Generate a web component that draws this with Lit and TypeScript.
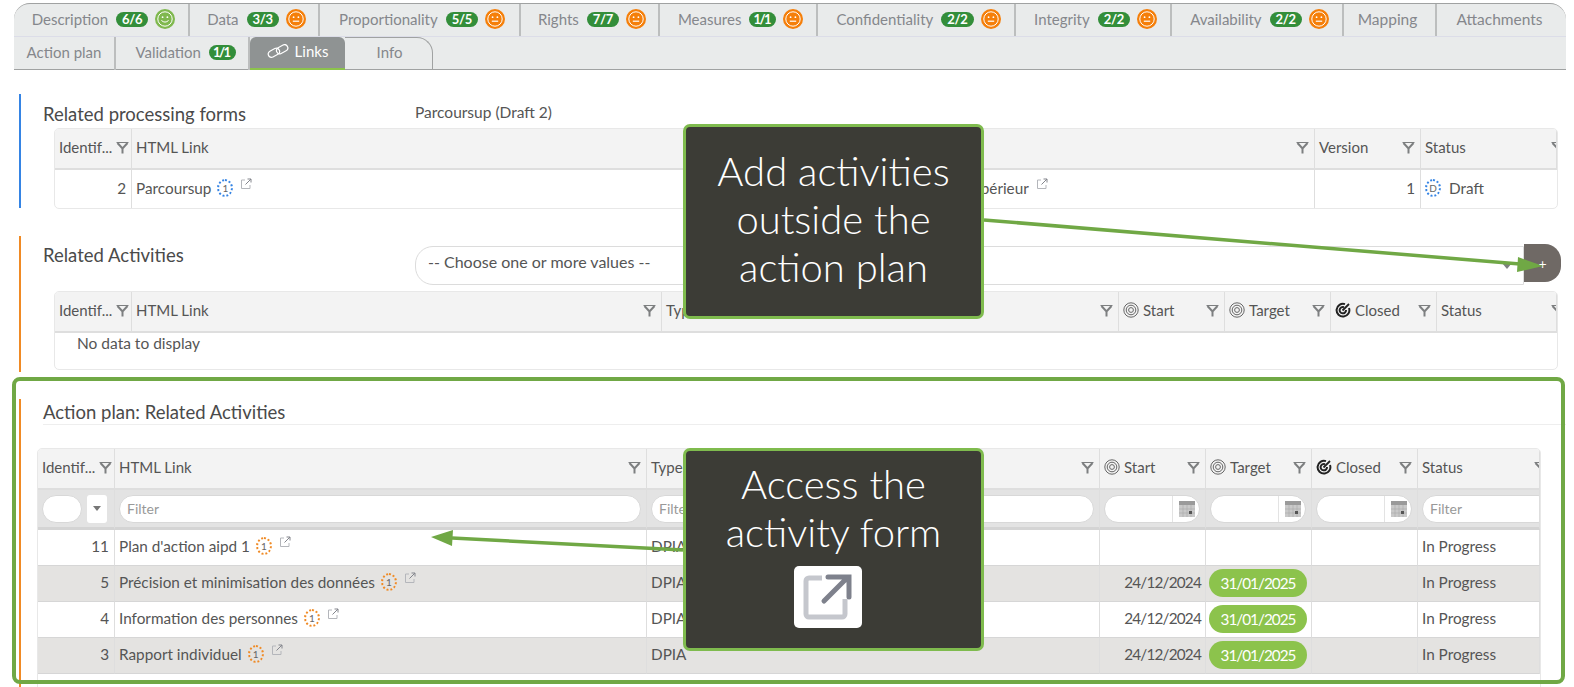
import {LitElement, css, html, svg} from "lit";
import {customElement} from "lit/decorators.js";

const face = (happy: boolean) => html`
    <svg class="face" viewBox="0 0 20 20">
        <circle cx="10" cy="10" r="10" fill=${happy ? "#7fb84e" : "#f57f0a"}></circle>
        <circle cx="10" cy="10" r="7.2" fill="none" stroke="#fff" stroke-width="1"></circle>
        <circle cx="7.6" cy="8.2" r=".9" fill="#fff"></circle>
        <circle cx="12.4" cy="8.2" r=".9" fill="#fff"></circle>
        ${happy
            ? svg`<path d="M6.4 11.4q3.6 3.4 7.2 0" fill="none" stroke="#fff" stroke-width="1"></path>`
            : svg`<path d="M6.8 12.2h6.4" fill="none" stroke="#fff" stroke-width="1.2"></path>`}
    </svg>`;

const funnel = html`
    <svg class="funnel" viewBox="0 0 13 13" fill="none" stroke="#7d7f80">
        <path d="M.5 1.500h12" stroke-width="1"></path>
        <path d="M1.500 2 6.500 7.500 11.500 2M6.500 7v5.500" stroke-width="2"></path>
    </svg>`;

const ext = html`
    <svg class="ext" viewBox="0 0 12 12" fill="none" stroke="#b4b6bb" stroke-width="1">
        <path d="M5 2H1.500v8.500H10V7"></path>
        <path d="M5.500 6.500 11 1M7.500 1H11v3.500" stroke="#83858c"></path>
    </svg>`;

const target = html`
    <svg class="target" viewBox="0 0 16 16" fill="none" stroke="#666">
        <circle cx="8" cy="8" r="7.200"></circle>
        <circle cx="8" cy="8" r="4.800"></circle>
        <circle cx="8" cy="8" r="2.400"></circle>
    </svg>`;

const closed = html`
    <svg class="target" viewBox="0 0 16 16" fill="none" stroke="#222" stroke-width="2">
        <path d="M10 2.100A6.400 6.400 0 1 0 14 6"></path>
        <path d="M9 5.200A3.200 3.200 0 1 0 11 8"></path>
        <path d="M7.500 8.500 14 2" stroke-width="1.800"></path>
    </svg>`;

const calendar = html`
    <svg class="cal" viewBox="0 0 16 16">
        <rect width="16" height="16" fill="#9a9a9a"></rect>
        <rect y="4" width="16" height="12" fill="#c9c9c9"></rect>
        <path d="M0 8h16M0 12h16M4 4v12M8 4v12M12 4v12" stroke="#aaa" stroke-width=".6"></path>
        <rect x="10" y="10" width="3" height="3" fill="#555"></rect>
    </svg>`;

const tabsTop = [
    ["Description", "6/6", true],
    ["Data", "3/3", false],
    ["Proportionality", "5/5", false],
    ["Rights", "7/7", false],
    ["Measures", "1/1", false],
    ["Confidentiality", "2/2", false],
    ["Integrity", "2/2", false],
    ["Availability", "2/2", false],
    ["Mapping"],
    ["Attachments"],
] as [string, string?, boolean?][];

const activities = [
    ["11", "Plan d'action aipd 1", "", ""],
    ["5", "Précision et minimisation des données", "24/12/2024", "31/01/2025"],
    ["4", "Information des personnes", "24/12/2024", "31/01/2025"],
    ["3", "Rapport individuel", "24/12/2024", "31/01/2025"],
];

const badge = (count: string) =>
    html`<span class="badge ${count === "1/1" ? "narrow" : ""}">${count}</span>`;

@customElement("app-root")
export class AppRoot extends LitElement {
    static styles = css`
        :host {
            display: block;
            position: relative;
            height: 687px;
            overflow: hidden;
            background: #fff;
            font-family: Lato, "Liberation Sans", sans-serif;
            font-size: 15px;
            color: #555;
        }

        .tabs {
            margin: 3px 0 0 14px;
            width: 1552px;
            height: 67px;
            background: #e9ebeb;
            border-top: 1px solid #a0a2a2;
            border-bottom: 1px solid #a0a2a2;
            border-radius: 16px 16px 0 0;
            box-sizing: border-box;
        }

        .tab-row {
            display: grid;
            height: 33px;
            color: #85878c;
        }

        .tab-row.top {
            grid-template-columns: 176px 130px 201px 139px 158px 198px 156px 172px 93px 129px;
            border-bottom: 1px solid #dcdde8;
            box-sizing: border-box;
            width: 1552px;
        }

        .tab-row.bottom {
            grid-template-columns: 102px 134px 95px 88px;
        }

        .tab {
            display: flex;
            align-items: center;
            justify-content: center;
            gap: 8px;
            padding-bottom: 2px;
            border-right: 2px solid #bcbebe;
            box-sizing: border-box;
            white-space: nowrap;
        }

        .tab.scored {
            padding-left: 5px;
            gap: 8px;
        }

        .tab.plain {
            font-size: 15.500px;
            padding-right: 4px;
        }

        .tab:last-child {
            border-right: none;
        }

        .bottom .tab {
            padding-bottom: 3px;
        }

        .bottom .tab.valid {
            padding-left: 7px;
        }

        .tab.active {
            background: #8f9393;
            color: #fff;
            border-right: none;
            border-bottom: 2px solid #8cc34c;
            border-radius: 6px 6px 0 0;
            gap: 6px;
        }

        .bottom .tab.info {
            border: 1px solid #a0a2a2;
            border-left: none;
            border-bottom: none;
            border-radius: 0 16px 0 0;
            padding: 0 0 5px 2px;
        }

        .badge {
            background: #338e3a;
            color: #fff;
            font-size: 13px;
            font-weight: 700;
            line-height: 15px;
            letter-spacing: -.3px;
            padding: 0 6px;
            border-radius: 8px;
        }

        .badge.narrow {
            letter-spacing: -1.500px;
            padding: 0 6px 0 4px;
        }

        .face {
            width: 20px;
            height: 20px;
            margin-left: -1px;
        }

        .section {
            margin-left: 19px;
            width: 1547px;
            border-left: 2px solid #f08a24;
            box-sizing: border-box;
            padding-left: 22px;
        }

        .section.forms {
            margin-top: 24px;
            height: 114px;
            border-left-color: #3584e4;
        }

        .section.related {
            margin-top: 28px;
            height: 136px;
        }

        .section.plan {
            margin-top: 27px;
            height: 290px;
        }

        .head {
            display: flex;
            height: 34px;
        }

        .related .head {
            height: 55px;
        }

        .title {
            width: 372px;
            flex: none;
            font-size: 18.500px;
            line-height: 22px;
            color: #4a4a4a;
            padding-top: 9px;
        }

        .related .title {
            padding-top: 8px;
        }

        .draft {
            padding-top: 9px;
            font-size: 15.500px;
        }

        .select {
            width: 1109px;
            height: 39px;
            margin-top: 10px;
            padding-left: 12px;
            border: 1px solid #dcdcdc;
            border-radius: 18px 0 0 18px;
            box-sizing: border-box;
            display: flex;
            align-items: center;
            justify-content: space-between;
            padding-bottom: 8px;
            font-size: 16px;
        }

        .caret {
            width: 0;
            height: 0;
            border: 5px solid transparent;
            border-top: 6px solid #7d7f80;
            border-bottom: none;
            margin: 8px 11px 0 0;
        }

        .plus {
            width: 37px;
            height: 38px;
            margin-top: 8px;
            background: #6f6965;
            color: #fff;
            border-radius: 0 16px 16px 0;
            display: flex;
            align-items: center;
            justify-content: center;
            font-size: 14px;
        }

        .plan-title {
            height: 25px;
            font-size: 18.500px;
            line-height: 26px;
            border-bottom: 1px solid #eee;
            color: #4a4a4a;
            margin-bottom: 23px;
        }

        .table {
            display: grid;
            border: 1px solid #e8e8e8;
            border-radius: 5px;
            box-sizing: border-box;
            overflow: hidden;
        }

        .forms .table {
            margin-left: 11px;
            width: 1504px;
            grid-template-columns: 77px 734px 449px 106px 1fr;
        }

        .related .table {
            margin-left: 11px;
            width: 1504px;
            height: 79px;
            grid-template-columns: 77px 530px 457px 106px 106px 106px 1fr;
            grid-template-rows: 41px 1fr;
        }

        .plan .table {
            margin-left: -6px;
            width: 1504px;
            grid-template-columns: 77px 532px 453px 106px 106px 106px 1fr;
        }

        .cell {
            display: flex;
            align-items: center;
            gap: 4px;
            padding: 0 4px;
            min-width: 0;
            white-space: nowrap;
            border-right: 1px solid #dedede;
            box-sizing: border-box;
            overflow: hidden;
        }

        .cell:last-child {
            border-right: none;
        }

        .th {
            height: 41px;
            background: #f3f3f3;
            border-bottom: 2px solid #dedede;
            justify-content: space-between;
            padding: 0 5px 3px 4px;
        }

        .th .label {
            display: flex;
            align-items: center;
            gap: 4px;
        }

        .funnel {
            width: 13px;
            height: 13px;
            flex: none;
        }

        .th.clip .funnel {
            margin-right: -13px;
        }

        .target {
            width: 16px;
            height: 16px;
            flex: none;
        }

        .filter {
            height: 40px;
            background: #e3e3e3;
            border-bottom: 3px solid #d4d4d4;
            padding: 0 5px 0 4px;
        }

        .field {
            flex: 1;
            min-width: 0;
            height: 28px;
            border: 1px solid #d8d8d8;
            border-radius: 14px;
            background: #fff;
            padding: 0 7px;
            box-sizing: border-box;
            font: 14px Lato, sans-serif;
        }

        .field::placeholder {
            color: #999;
        }

        .field.over {
            flex: none;
            width: 130px;
        }

        .id-field {
            flex: none;
            width: 40px;
        }

        .id-drop {
            flex: none;
            width: 20px;
            height: 28px;
            margin-left: 1px;
            background: #fff;
            border-radius: 3px;
            display: flex;
            align-items: center;
            justify-content: center;
        }

        .id-drop::after {
            content: "";
            border: 4px solid transparent;
            border-top: 5px solid #777;
            border-bottom: none;
        }

        .date {
            flex: 1;
            display: flex;
            justify-content: flex-end;
            align-items: center;
            height: 28px;
            background: linear-gradient(to right, #fff 0 calc(100% - 27px), #e3e3e3 calc(100% - 27px) calc(100% - 26px), #fff calc(100% - 26px));
            border: 1px solid #d8d8d8;
            border-radius: 14px;
            box-sizing: border-box;
            padding-right: 4px;
        }

        .cal {
            width: 16px;
            height: 16px;
        }

        .td {
            height: 36px;
            border-bottom: 1px solid #d6d6d6;
            padding-bottom: 3px;
            font-size: 15.300px;
        }

        .forms .td {
            height: 38px;
            border-bottom: none;
        }

        .td.num {
            justify-content: flex-end;
            padding-right: 5px;
        }

        .td.when {
            letter-spacing: -.8px;
            padding-right: 4px;
        }

        .td.alt {
            background: #e4e3e1;
        }

        .td.pill-cell {
            padding: 0 3px 2px;
        }

        .pill {
            width: 98px;
            height: 28px;
            display: flex;
            align-items: center;
            justify-content: center;
            background: #8cc34c;
            color: #fff;
            border-radius: 14px;
            letter-spacing: -1px;
        }

        .ext {
            width: 12px;
            height: 12px;
            flex: none;
            margin: -8px 0 0 3px;
        }

        .dot {
            flex: none;
            width: 12px;
            height: 14px;
            margin-left: 2px;
            border: 2px dotted #f08a24;
            border-radius: 50%;
            display: flex;
            align-items: center;
            justify-content: center;
            font-size: 10px;
            line-height: 1;
            color: #666;
        }

        .dot.blue {
            border-color: #3584e4;
        }

        .status-dot {
            margin: 0 4px 0 0;
        }

        .empty {
            grid-column: 1 / -1;
            padding: 1px 0 0 22px;
            font-size: 15.500px;
        }

        .tail {
            height: 20px;
            grid-column: 1 / -1;
        }

        .muted {
            padding-left: 1px;
        }

        .arrows {
            position: absolute;
            inset: 0;
            width: 1574px;
            height: 687px;
        }

        .frame {
            position: absolute;
            left: 12px;
            top: 377px;
            width: 1553px;
            height: 307px;
            border: 4px solid #70a845;
            border-radius: 8px;
            box-sizing: border-box;
        }

        .callout {
            position: absolute;
            left: 683px;
            width: 301px;
            box-sizing: border-box;
            background: #3c3c36;
            border: 3px solid #7fbb4e;
            border-radius: 7px;
            color: #fff;
            font-size: 40px;
            font-weight: 300;
            line-height: 48px;
            text-align: center;
            display: flex;
            flex-direction: column;
            align-items: center;
            padding-top: 20px;
        }

        .callout.add {
            top: 124px;
            height: 195px;
        }

        .callout.access {
            top: 448px;
            height: 203px;
            padding-top: 9px;
        }

        .open-icon {
            width: 68px;
            height: 62px;
            margin: 10px 0 0 -11px;
            background: #fff;
            border-radius: 5px;
            display: flex;
            align-items: center;
            justify-content: center;
        }

        .open-icon svg {
            width: 50px;
            height: 50px;
        }
    `;

    private th(label: unknown, clip = false) {
        return html`<div class="cell th ${clip ? "clip" : ""}"><span class="label">${label}</span>${funnel}</div>`;
    }

    private activityHead() {
        return html`
            ${this.th("Identif...")}
            ${this.th("HTML Link")}
            ${this.th("Type")}
            ${this.th(html`${target}Start`)}
            ${this.th(html`${target}Target`)}
            ${this.th(html`${closed}Closed`)}
            ${this.th("Status", true)}
        `;
    }

    private activityRow(row: string[], i: number) {
        const alt = i % 2 ? "alt" : "";
        return html`
            <div class="cell td num ${alt}">${row[0]}</div>
            <div class="cell td ${alt}">${row[1]}<span class="dot">1</span>${ext}</div>
            <div class="cell td ${alt}">DPIA</div>
            <div class="cell td num when ${alt}">${row[2]}</div>
            <div class="cell td pill-cell ${alt}">${row[3] ? html`<span class="pill">${row[3]}</span>` : ""}</div>
            <div class="cell td ${alt}"></div>
            <div class="cell td ${alt}">In Progress</div>
        `;
    }

    private dateFilter() {
        return html`<div class="cell filter"><div class="date">${calendar}</div></div>`;
    }

    protected render() {
        return html`
            <div class="tabs">
                <div class="tab-row top">
                    ${tabsTop.map(([name, count, happy]) => html`
                        <div class="tab ${count ? "scored" : "plain"}">
                            ${name}
                            ${count ? html`${badge(count)}${face(!!happy)}` : ""}
                        </div>
                    `)}
                </div>
                <div class="tab-row bottom">
                    <div class="tab">Action plan</div>
                    <div class="tab valid">Validation ${badge("1/1")}</div>
                    <div class="tab active">
                        <svg width="22" height="14" viewBox="0 0 22 14" fill="none" stroke="#fff" stroke-width="1.200">
                            <rect x="1" y="5.500" width="12" height="6.500" rx="3.200" transform="rotate(-28 7 9)"></rect>
                            <rect x="9" y="2" width="12" height="6.500" rx="3.200" transform="rotate(-28 15 5)"></rect>
                        </svg>
                        Links
                    </div>
                    <div class="tab info">Info</div>
                </div>
            </div>

            <div class="section forms">
                <div class="head">
                    <div class="title">Related processing forms</div>
                    <div class="draft">Parcoursup (Draft 2)</div>
                </div>
                <div class="table">
                    ${this.th("Identif...")}
                    <div class="cell th"><span class="label">HTML Link</span></div>
                    ${this.th("")}
                    ${this.th("Version")}
                    ${this.th("Status", true)}
                    <div class="cell td num">2</div>
                    <div class="cell td">Parcoursup<span class="dot blue">1</span>${ext}</div>
                    <div class="cell td muted">Enseignement supérieur${ext}</div>
                    <div class="cell td num">1</div>
                    <div class="cell td"><span class="dot blue status-dot">D</span>Draft</div>
                </div>
            </div>

            <div class="section related">
                <div class="head">
                    <div class="title">Related Activities</div>
                    <div class="select">-- Choose one or more values --<span class="caret"></span></div>
                    <div class="plus">+</div>
                </div>
                <div class="table">
                    ${this.activityHead()}
                    <div class="empty">No data to display</div>
                </div>
            </div>

            <div class="section plan">
                <div class="plan-title">Action plan: Related Activities</div>
                <div class="table">
                    ${this.activityHead()}
                    <div class="cell filter"><input class="field id-field" /><span class="id-drop"></span></div>
                    <div class="cell filter"><input class="field" placeholder="Filter" /></div>
                    <div class="cell filter"><input class="field" placeholder="Filter" /></div>
                    ${this.dateFilter()}
                    ${this.dateFilter()}
                    ${this.dateFilter()}
                    <div class="cell filter"><input class="field over" placeholder="Filter" /></div>
                    ${activities.map((row, i) => this.activityRow(row, i))}
                    <div class="tail"></div>
                </div>
            </div>

            <div class="frame"></div>

            <svg class="arrows" viewBox="0 0 1574 687">
                <path d="M984 220 1520 264" stroke="#70a845" stroke-width="3.500"></path>
                <path d="M1543 266 1518 257 1517 272z" fill="#70a845"></path>
                <path d="M683 550 452 538" stroke="#70a845" stroke-width="3.500"></path>
                <path d="M431 537 453 530 452 546z" fill="#70a845"></path>
            </svg>

            <div class="callout add">Add activities<br />outside the<br />action plan</div>
            <div class="callout access">
                Access the<br />activity form
                <div class="open-icon">
                    <svg viewBox="0 0 50 50" fill="none" stroke-width="5">
                        <path d="M19 6H6a3 3 0 0 0-3 3v33a3 3 0 0 0 3 3h33a3 3 0 0 0 3-3V27" stroke="#c5c7cd"></path>
                        <path d="M21 29 44 6M25 5h21v20" stroke="#7e818c" stroke-linecap="round"></path>
                    </svg>
                </div>
            </div>
        `;
    }
}
